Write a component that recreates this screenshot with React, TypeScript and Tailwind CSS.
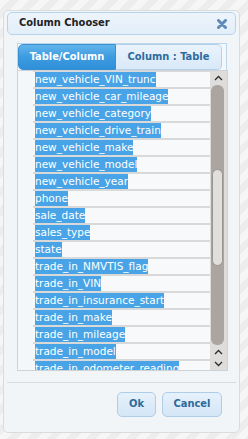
const columns = [
  "new_vehicle_VIN_trunc",
  "new_vehicle_car_mileage",
  "new_vehicle_category",
  "new_vehicle_drive_train",
  "new_vehicle_make",
  "new_vehicle_model",
  "new_vehicle_year",
  "phone",
  "sale_date",
  "sales_type",
  "state",
  "trade_in_NMVTIS_flag",
  "trade_in_VIN",
  "trade_in_insurance_start",
  "trade_in_make",
  "trade_in_mileage",
  "trade_in_model",
  "trade_in_odometer_reading",
];

function Chevron({ down }: { down?: boolean }) {
  return (
    <svg width="9" height="6" viewBox="0 0 9 6" fill="none">
      <polyline
        points={down ? "1,1 4.5,4.5 8,1" : "1,5 4.5,1.5 8,5"}
        stroke="#2b2b2b"
        strokeWidth="1.3"
      />
    </svg>
  );
}

export default function App() {
  return (
    <div className="w-[248px] h-[439px] pt-[10px] pl-[3px] bg-[repeating-linear-gradient(135deg,#f6f6f6_0px,#f6f6f6_7px,#ededed_7px,#ededed_14px)] font-['DejaVu_Sans',sans-serif]">
      <div className="w-[237px] h-[423px] flex flex-col border border-[#d9dcdf] rounded-[5px] bg-[#f2f5f8] pt-[1px] px-[3px]">
        {/* Title bar */}
        <div className="h-[23px] flex items-center justify-between pl-[11px] pr-[8px] rounded-[5px] border border-[#b7d3ec] bg-[linear-gradient(#edf4fb,#e2eef9)]">
          <span className="text-[11px] font-bold text-[#222] font-['DejaVu_Sans_Condensed','DejaVu_Sans',sans-serif] [font-stretch:condensed]">
            Column Chooser
          </span>
          <svg width="10" height="10" viewBox="0 0 10 10">
            <path d="M1.5 1.5L8.5 8.5M8.5 1.5L1.5 8.5" stroke="#5d8ab6" strokeWidth="3" strokeLinecap="round" />
          </svg>
        </div>

        {/* Tabs */}
        <div className="ml-[10px] mt-[8px] w-[210px] h-[27px] flex border border-b-0 border-[#bcd6ec] bg-[#f4f8fb] font-['DejaVu_Sans_Condensed','DejaVu_Sans',sans-serif] [font-stretch:condensed] text-[11px] font-bold">
          <div className="w-[98px] h-[26px] flex items-center justify-center rounded-l-[5px] border border-[#3a8ed2] bg-[linear-gradient(#62b5ec,#3d9be0_50%,#2f8fd8)] text-white">
            Table/Column
          </div>
          <div className="w-[106px] h-[26px] flex items-center justify-center rounded-r-[5px] border border-l-0 border-[#b2d1ec] bg-[linear-gradient(#eaf3fc,#d9e9f8)] text-[#2d6c9e]">
            Column : Table
          </div>
        </div>

        {/* List */}
        <div className="ml-[10px] w-[211px] h-[301px] flex border border-[#cdd2d6] overflow-hidden">
          <div className="w-[15px] bg-[#f4f7f9]" />
          <div className="w-[177px] flex flex-col gap-[2px] pt-[1px] bg-[#d9d9d9] overflow-hidden">
            {columns.map((c) => (
              <div key={c} className="h-[15px] shrink-0 flex items-center pl-[2px] bg-[#f8f9fb] text-[10.5px] leading-[15px] whitespace-nowrap">
                <span className="bg-[#48a4e6] text-white">{c}</span>
              </div>
            ))}
          </div>
          <div className="w-[17px] flex flex-col items-center bg-[#dfdddb] pt-[1px]">
            <div className="h-[12px] flex items-center justify-center">
              <Chevron />
            </div>
            <div className="w-[13px] flex-1 mt-[1px] -ml-[2px] rounded-[6px] bg-[#aaa5a1] flex flex-col pt-[84px]">
              <div className="h-[97px] mx-[1px] rounded-[6px] border border-[#9a9591] bg-[#e1dfdc]" />
            </div>
            <div className="h-[12px] flex items-center justify-center mt-[1px]">
              <Chevron />
            </div>
            <div className="h-[12px] flex items-center justify-center">
              <Chevron down />
            </div>
          </div>
        </div>

        {/* Footer */}
        <div className="mt-[11px] border-t border-[#d8dce0]" />
        <div className="flex justify-end gap-[6px] mt-[9px] mr-[14px] font-['DejaVu_Sans_Condensed','DejaVu_Sans',sans-serif] [font-stretch:condensed] text-[11px] font-bold text-[#2d6a98]">
          <button className="w-[39px] h-[25px] rounded-[5px] border border-[#aecde8] bg-[linear-gradient(#e6f1fb,#d4e6f6)]">
            Ok
          </button>
          <button className="w-[60px] h-[25px] rounded-[5px] border border-[#aecde8] bg-[linear-gradient(#e6f1fb,#d4e6f6)]">
            Cancel
          </button>
        </div>
      </div>
    </div>
  );
}
